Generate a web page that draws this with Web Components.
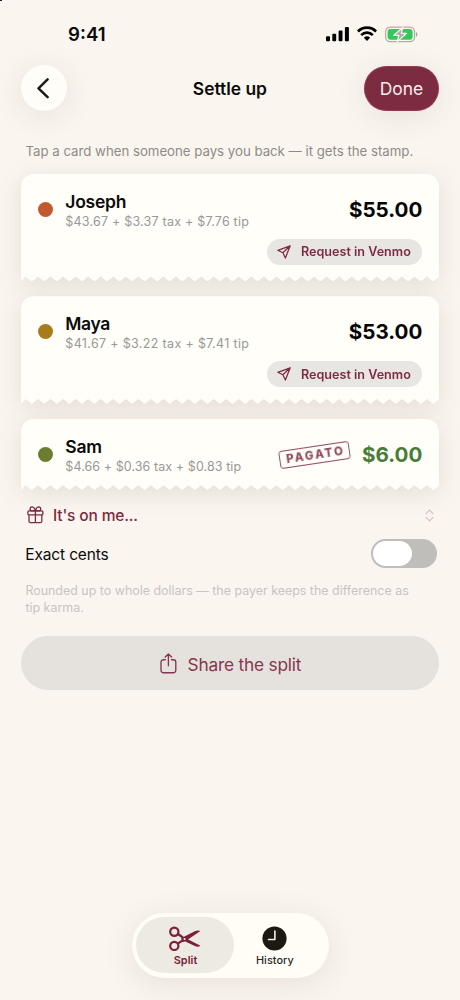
<!DOCTYPE html>
<html lang="en">
<head>
<meta charset="utf-8">
<title>Settle up</title>
<style>
body { margin: 0; background: #faf5ef; font-family: Inter, "Noto Sans", sans-serif; color: #0b0b0b; }
</style>
</head>
<body>
<settle-app></settle-app>
<script>
const define = (name, markup, setup) => {
  const template = document.createElement('template');
  template.innerHTML = markup;
  customElements.define(name, class extends HTMLElement {
    connectedCallback() {
      if (this.shadowRoot) return;
      this.attachShadow({ mode: 'open' }).append(template.content.cloneNode(true));
      if (setup) setup(this, this.shadowRoot);
    }
  });
};

define('status-bar', `
<style>
  :host { display: flex; box-sizing: border-box; height: 65px; padding: 4px 42.3px 0 68px; align-items: center; justify-content: space-between; position: relative; }
  .time { font-size: 18.7px; font-weight: 600; line-height: 24px; }
  .icons { display: flex; align-items: center; gap: 7.5px; margin-top: -1px; }
  svg { display: block; }
  .corner { position: absolute; left: 0; top: 0; width: 2px; height: 1px; background: #222; }
</style>
<i class="corner"></i>
<span class="time">9:41</span>
<div class="icons">
  <svg width="24" height="16" viewBox="0 0 24 16"><path d="M0 11.2a1 1 0 0 1 1-1h2a1 1 0 0 1 1 1v3.1a1 1 0 0 1-1 1H1a1 1 0 0 1-1-1zM6.3 8.7a1 1 0 0 1 1-1h1.9a1 1 0 0 1 1 1v5.6a1 1 0 0 1-1 1H7.3a1 1 0 0 1-1-1zM12.6 5.5a1 1 0 0 1 1-1h1.9a1 1 0 0 1 1 1v8.8a1 1 0 0 1-1 1h-1.9a1 1 0 0 1-1-1zM18.9 2a1 1 0 0 1 1-1h2a1 1 0 0 1 1 1v12.3a1 1 0 0 1-1 1h-2a1 1 0 0 1-1-1z"/></svg>
  <svg width="20" height="16" viewBox="0 0 20 16" fill="none" stroke="#000" stroke-width="2.7"><path d="M.9 5.5C6 .4 14 .4 19.1 5.5M4.200 9.100c3.300-3.300 8.300-3.300 11.600 0"/><path d="M10 14.900 6.900 11.800a4.500 4.500 0 0 1 6.200 0z" fill="#000" stroke="none"/></svg>
  <svg width="33" height="17" viewBox="0 0 33 17">
    <rect x=".6" y="1.1" width="29" height="14.6" rx="4.7" fill="none" stroke="#b0aea9" stroke-width="1.2"/>
    <path d="M31 6.200c1.900.6 1.900 3.900 0 4.500z" fill="#a9a7a3"/>
    <rect x="2.600" y="3.100" width="25" height="10.600" rx="3" fill="#34c759"/>
    <path d="M18 1.200 8.800 9.300h5.100l-1.700 6.300 9.400-8.300h-5.300z" fill="#aaa9a4" stroke="#faf5ef" stroke-width="1.200" stroke-linejoin="round"/>
  </svg>
</div>`);

define('nav-bar', `
<style>
  :host { display: grid; grid-template-columns: 75px 1fr 75px; align-items: center; height: 46px; padding: 0 21.5px 0 21.3px; }
  .back, .done { border: 0; padding: 0; font: inherit; display: flex; align-items: center; justify-content: center; }
  .back { width: 46px; height: 46px; border-radius: 50%; background: #fffdf7; box-shadow: 0 5px 30px rgba(70,60,30,.1); }
  .done { width: 75px; height: 45px; border-radius: 22.5px; background: #7d2b40; color: #f7eeec; font-size: 17.4px; box-shadow: 0 5px 30px rgba(70,60,30,.1), inset 0 0 0 1px rgba(190,90,120,.35); padding: 1px 0 0 1px; box-sizing: border-box; }
  h1 { margin: 0; padding-top: 1px; text-align: center; font-size: 17.4px; line-height: 24px; font-weight: 600; }
</style>
<button class="back" aria-label="Back"><svg width="14" height="22" viewBox="0 0 14 22" fill="none" stroke="#1c1a18" stroke-width="2.5" stroke-linecap="round" stroke-linejoin="round"><path d="M10.6 2.300 1.500 11.300l9.100 8.800"/></svg></button>
<h1><slot></slot></h1>
<button class="done">Done</button>`);

define('venmo-button', `
<style>
  :host { display: flex; align-items: center; align-self: flex-end; box-sizing: border-box; width: 155.5px; height: 26px; margin-top: 9.3px; padding-left: 10.5px; gap: 10px; border-radius: 13px; background: #e8e6e2; color: #7d2b45; font-size: 12.6px; font-weight: 600; white-space: nowrap; }
  svg { flex: none; }
</style>
<svg width="14" height="14" viewBox="0 0 14 14" fill="none" stroke="currentColor" stroke-width="1.25" stroke-linejoin="round"><path d="M13.200.8.800 5.300l5.100 2.500 2.500 5.300zM13.200.8 5.900 7.800"/></svg>
<span>Request in Venmo</span>`);

define('paid-stamp', `
<style>
  :host { display: flex; box-sizing: border-box; width: 71px; height: 17.5px; align-items: center; justify-content: center; border: 1.4px solid #97536a; border-radius: 3px; transform: rotate(-8.5deg); color: #914a61; font-size: 11.5px; font-weight: 800; letter-spacing: 2px; padding-left: 2px; margin-top: -1px; }
</style>
<slot></slot>`);

define('receipt-card', `
<style>
  :host { display: block; filter: drop-shadow(0 5px 12px rgba(70,60,30,.12)); }
  .paper { display: flex; flex-direction: column; box-sizing: border-box; padding: 17px 17px 15.3px 17px; border-radius: 13px 13px 0 0; background: #fffef9; }
  :host([due]) .paper { padding-bottom: 16.5px; }
  .row { display: flex; align-items: center; height: 39px; }
  .dot { flex: none; width: 15px; height: 15px; border-radius: 50%; background: var(--dot); margin: -1.4px 12.3px 0 0; }
  .who { flex: 1; white-space: nowrap; }
  .name { font-size: 17.5px; line-height: 22px; font-weight: 600; letter-spacing: var(--name-track, -.25px); }
  .sum { font-size: 12.5px; line-height: 17px; color: #989898; letter-spacing: var(--sum-track, .22px); }
  .amount { font-size: 20.6px; line-height: 26px; font-weight: 700; color: var(--amount, #050505); margin: -1px -.3px 0 12px; }
</style>
<div class="paper">
  <div class="row">
    <i class="dot"></i>
    <div class="who"><div class="name"><slot name="name"></slot></div><div class="sum"><slot name="sum"></slot></div></div>
    <slot name="stamp"></slot>
    <div class="amount"><slot name="amount"></slot></div>
  </div>
  <slot></slot>
</div>`, (host, root) => {
  // Torn lower edge: notches every 12.55px.
  const points = ['0 0', '418px 0', '418px calc(100% - 4.5px)'];
  for (let i = 32; i >= 0; i--) {
    const x = 10.7 + i * 12.55;
    points.push(x.toFixed(2) + 'px 100%', (x - 6.27).toFixed(2) + 'px calc(100% - 4.9px)');
  }
  points.push('0 100%');
  root.querySelector('.paper').style.clipPath = 'polygon(' + points.join(',') + ')';
});

define('treat-row', `
<style>
  :host { display: flex; align-items: center; height: 24px; margin-top: 13px; padding: 0 26px 0 26.5px; color: #7d2b40; }
  .label { flex: 1; margin-left: 9.5px; font-size: 15.5px; font-weight: 500; letter-spacing: -.15px; }
</style>
<svg width="17" height="18" viewBox="0 0 17 18" fill="none" stroke="currentColor" stroke-width="1.3" stroke-linejoin="round"><rect x=".9" y="4.9" width="15" height="3.9" rx="1"/><path d="M2 8.800v6.400a1.500 1.500 0 0 0 1.500 1.500h9.800a1.500 1.500 0 0 0 1.500-1.500V8.800M8.400 4.900v11.800M8.400 4.900C7.700 2.300 6.500.9 5 .9a1.900 1.900 0 0 0-1.900 2c0 1.100.8 2 1.900 2zM8.400 4.900C9.100 2.300 10.300.9 11.800.9a1.900 1.900 0 0 1 1.900 2c0 1.100-.8 2-1.900 2z"/></svg>
<span class="label"><slot></slot></span>
<svg width="9" height="13" viewBox="0 0 9 13" fill="none" stroke="#d5bdbe" stroke-width="1.1" stroke-linecap="round" stroke-linejoin="round"><path d="M1 4.600 4.500 1.200 8 4.600M1 8.400l3.500 3.400L8 8.400"/></svg>`);

define('toggle-row', `
<style>
  :host { display: flex; align-items: center; justify-content: space-between; height: 30px; margin-top: 11.4px; padding: 0 23px 0 25.3px; font-size: 15.5px; letter-spacing: -.15px; }
  .label { padding-top: 1.6px; }
  .track { box-sizing: border-box; width: 66.5px; height: 29.7px; padding: 2px; border-radius: 15px; background: #bfbeba; }
  .knob { width: 39px; height: 25.7px; border-radius: 13px; background: #fff; }
</style>
<span class="label"><slot></slot></span>
<div class="track" role="switch" aria-checked="false"><div class="knob"></div></div>`);

define('share-button', `
<style>
  :host { display: flex; align-items: center; justify-content: center; height: 54.3px; margin: 19.4px 21px 0 21.3px; gap: 10.5px; border-radius: 27.2px; background: #e5e2dd; color: #863650; font-size: 17.3px; letter-spacing: -.2px; }
  span { padding-top: 2.5px; }
  svg { margin: 1.5px 0 0 1px; }
</style>
<svg width="17" height="21" viewBox="0 0 17 21" fill="none" stroke="currentColor" stroke-width="1.35" stroke-linecap="round" stroke-linejoin="round"><path d="M5.300 6.700H3.400A2.400 2.400 0 0 0 1 9.100v8.200a2.400 2.400 0 0 0 2.400 2.400h10A2.400 2.400 0 0 0 15.800 17.300V9.100a2.400 2.400 0 0 0-2.400-2.400h-1.900M8.400 12.800V1.200M5.200 4.100l3.200-3.200 3.200 3.200"/></svg>
<span><slot></slot></span>`);

define('tab-item', `
<style>
  :host { display: flex; flex-direction: column; align-items: center; box-sizing: border-box; width: 98px; height: 56px; border-radius: 28px; color: #2c2a26; font-size: 10.9px; font-weight: 550; line-height: 14px; padding-top: 8px; }
  :host([selected]) { background: #eceae2; color: #7a2136; font-weight: 600; }
  .icon { height: 27px; display: flex; align-items: center; }
  .text { padding: .4px 0 0 1px; letter-spacing: .05px; }
</style>
<div class="icon"><slot name="icon"></slot></div>
<span class="text"><slot></slot></span>`);

define('tab-bar', `
<style>
  :host { display: flex; box-sizing: border-box; width: 197px; height: 65px; margin: auto auto 22px 131.5px; padding: 4.3px 4.5px; border-radius: 32.5px; background: #fffdf6; box-shadow: 0 6px 32px rgba(70,60,30,.11); }
  tab-item + tab-item { margin-left: -8.6px; }
  svg { display: block; }
</style>
<tab-item selected>Split
  <svg slot="icon" width="32" height="26" viewBox="0 0 32 26"><g fill="none" stroke="#7a2136" stroke-width="2.2"><circle cx="5.3" cy="5.7" r="4.1"/><circle cx="5.3" cy="19.9" r="4.1"/><path d="M8.900 8 14 11.500M8.900 17.700l5.400-3.800"/></g><path d="M12 12.300 25.800 5.300c2-1 4.200-1 5.600-.2L17.500 14.600 14 16.300zM19.300 13.500 31.400 19.800c-1.400 1.100-3.600 1.100-5.600.2L15.800 15.200z" fill="#7a2136"/><circle cx="15.600" cy="13" r="1.100" fill="#eceae2"/></svg>
</tab-item>
<tab-item>History
  <svg slot="icon" width="25" height="25" viewBox="0 0 25 25"><circle cx="12.5" cy="12.5" r="12.1" fill="#1c1912"/><path d="M12.900 5v8.500H6.500" fill="none" stroke="#f3f1ea" stroke-width="1.6" stroke-linecap="round" stroke-linejoin="round"/></svg>
</tab-item>`);

define('settle-app', `
<style>
  :host { display: flex; flex-direction: column; height: 1000px; overflow: hidden; }
  .hint { margin: 30.5px 0 0 25.5px; font-size: 13.25px; line-height: 18px; color: #8e8b87; white-space: nowrap; letter-spacing: -.02px; }
  .cards { display: flex; flex-direction: column; gap: 14.8px; margin: 14.1px 21px 0; }
  .note { margin: 14.5px 40px 0 25.4px; font-size: 12.45px; line-height: 16.7px; color: #c9c4bf; }
</style>
<status-bar></status-bar>
<nav-bar>Settle up</nav-bar>
<p class="hint">Tap a card when someone pays you back — it gets the stamp.</p>
<section class="cards">
  <receipt-card due style="--dot:#c25a31"><span slot="name">Joseph</span><span slot="sum">$43.67 + $3.37 tax + $7.76 tip</span><span slot="amount">$55.00</span><venmo-button></venmo-button></receipt-card>
  <receipt-card due style="--dot:#a87b1d;--name-track:-.35px;--sum-track:.34px"><span slot="name">Maya</span><span slot="sum">$41.67 + $3.22 tax + $7.41 tip</span><span slot="amount">$53.00</span><venmo-button></venmo-button></receipt-card>
  <receipt-card style="--dot:#6b7d31;--amount:#487d36;--sum-track:.08px"><span slot="name">Sam</span><span slot="sum">$4.66 + $0.36 tax + $0.83 tip</span><paid-stamp slot="stamp">PAGATO</paid-stamp><span slot="amount">$6.00</span></receipt-card>
</section>
<treat-row>It's on me...</treat-row>
<toggle-row>Exact cents</toggle-row>
<p class="note">Rounded up to whole dollars — the payer keeps the difference as tip karma.</p>
<share-button>Share the split</share-button>
<tab-bar></tab-bar>`);
</script>
</body>
</html>
